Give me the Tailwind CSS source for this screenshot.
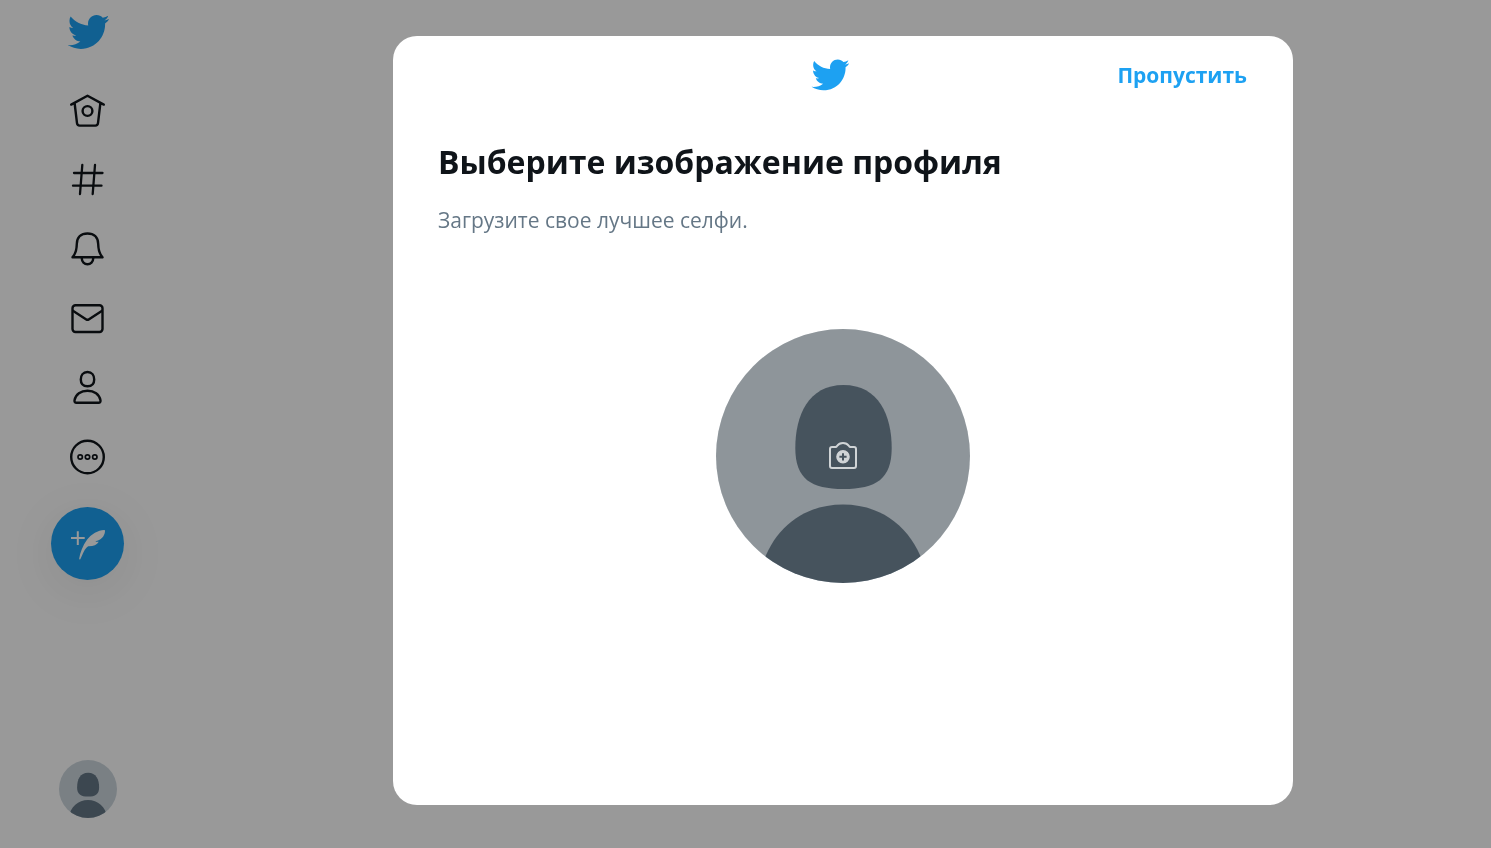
<!DOCTYPE html>
<html lang="ru">
<head>
    <meta charset="UTF-8">
    <meta name="viewport" content="width=device-width, initial-scale=1.0">
    <title>Выберите изображение профиля</title>
    <script src="https://cdn.jsdelivr.net/npm/@tailwindcss/browser@4"></script>
</head>
<body class="bg-white font-['Open_Sans','Noto_Sans',sans-serif] text-[#0f1419]">
    <!-- Shared shapes -->
    <svg class="hidden">
        <symbol id="bird" viewBox="0 0 24 24">
            <path fill="currentColor" d="M23.643 4.937c-.835.37-1.732.62-2.675.733.962-.576 1.7-1.49 2.048-2.578-.9.534-1.897.922-2.958 1.13-.85-.904-2.06-1.47-3.4-1.47-2.572 0-4.658 2.086-4.658 4.66 0 .364.042.718.12 1.06-3.873-.195-7.304-2.05-9.602-4.868-.4.69-.63 1.49-.63 2.342 0 1.616.823 3.043 2.072 3.878-.764-.025-1.482-.234-2.11-.583v.06c0 2.257 1.605 4.14 3.737 4.568-.392.106-.803.162-1.227.162-.3 0-.593-.028-.877-.082.593 1.85 2.313 3.198 4.352 3.234-1.595 1.25-3.604 1.995-5.786 1.995-.376 0-.747-.022-1.112-.065 2.062 1.323 4.51 2.093 7.14 2.093 8.57 0 13.255-7.098 13.255-13.254 0-.2-.005-.402-.014-.602.91-.658 1.7-1.477 2.323-2.41z"/>
        </symbol>
        <symbol id="person" viewBox="0 0 254 254">
            <rect width="254" height="254" fill="#ccd6dd"/>
            <path fill="#657786" d="M127.500 56C163 56 175.700 87 175.700 119C175.700 150 160 160 127.500 160S79.300 150 79.300 119C79.300 87 92 56 127.500 56Z"/>
            <path fill="#657786" d="M42 254C50 204 84 175.500 127 175.500S204 204 212 254Z"/>
        </symbol>
    </svg>

    <header class="flex min-h-screen w-[175px] flex-col items-center justify-between pt-2.5 pb-[30px]">
        <div class="flex flex-col items-center">
            <a href="/" aria-label="Твиттер" class="text-[#1da1f2]">
                <svg class="size-11"><use href="#bird"/></svg>
            </a>
            <nav class="mt-[37px] flex flex-col gap-[30px]">
                <a href="/home" aria-label="Главная">
                    <svg class="size-[39px]" viewBox="0 0 39 39" fill="none" stroke="currentColor" stroke-width="2.4" stroke-linecap="round" stroke-linejoin="round">
                        <path d="M3.200 13.600L19.500 4.700L35.800 13.600M6.600 12L9 32.200Q9.300 34.600 11.600 34.600H27.400Q29.700 34.600 30 32.200L32.400 12"/>
                        <circle cx="19.500" cy="20" r="4.900"/>
                    </svg>
                </a>
                <a href="/explore" aria-label="Обзор">
                    <svg class="size-[39px]" viewBox="0 0 39 39" fill="none" stroke="currentColor" stroke-width="2.300" stroke-linecap="round">
                        <path d="M14.300 5L12 34M27 5L24.700 34M6 13H34.500M5 25.700H33.500"/>
                    </svg>
                </a>
                <a href="/notifications" aria-label="Уведомления">
                    <svg class="size-[39px]" viewBox="0 0 39 39" fill="none" stroke="currentColor" stroke-width="2.400" stroke-linecap="round" stroke-linejoin="round">
                        <path d="M4.500 28.300C7.400 25 8.700 21 8.800 15C8.900 8.300 13 4.500 19.500 4.500S30.100 8.300 30.200 15C30.300 21 31.600 25 34.500 28.300Z"/>
                        <path d="M13.800 28.600V29.600A5.700 5.700 0 0 0 25.200 29.600V28.600"/>
                    </svg>
                </a>
                <a href="/messages" aria-label="Сообщения">
                    <svg class="size-[39px]" viewBox="0 0 39 39" fill="none" stroke="currentColor" stroke-width="2.400" stroke-linejoin="round">
                        <rect x="4.500" y="7.200" width="30" height="26.800" rx="3"/>
                        <path d="M4.500 12.500L18.300 21.400Q19.500 22.200 20.700 21.400L34.500 12.500"/>
                    </svg>
                </a>
                <a href="/profile" aria-label="Профиль">
                    <svg class="size-[39px]" viewBox="0 0 39 39" fill="none" stroke="currentColor" stroke-width="2.400" stroke-linejoin="round">
                        <path d="M19.500 5C24 5 26.200 8.400 26.200 12.600C26.200 17.400 24.200 19.300 19.500 19.300S12.800 17.400 12.800 12.600C12.800 8.400 15 5 19.500 5Z"/>
                        <path d="M19.500 23.700C26.200 23.700 31.400 27.400 32.500 33.400Q32.700 35.800 30.500 35.800H8.500Q6.300 35.800 6.500 33.400C7.600 27.400 12.800 23.700 19.500 23.700Z"/>
                    </svg>
                </a>
                <button type="button" aria-label="Ещё">
                    <svg class="size-[39px]" viewBox="0 0 39 39" fill="none" stroke="currentColor">
                        <circle cx="19.500" cy="21" r="16.300" stroke-width="2.400"/>
                        <g stroke-width="1.700">
                            <circle cx="12.200" cy="21" r="2.200"/>
                            <circle cx="19.500" cy="21" r="2.200"/>
                            <circle cx="26.800" cy="21" r="2.200"/>
                        </g>
                    </svg>
                </button>
            </nav>
            <button type="button" aria-label="Твитнуть" class="mt-8 rounded-full bg-[#1da1f2] text-white shadow-[0_10px_50px_rgba(0,0,0,0.08)]">
                <svg class="size-[73px]" viewBox="0 0 73 73">
                    <path stroke="currentColor" stroke-width="2" d="M20 31H33.700M26.800 24.200V38"/>
                    <path fill="currentColor" d="M28.200 51.500C29 46 31.800 38.500 36 32.700C40.500 27 47 23.200 53.200 23Q54.200 23.100 54 24.300C53.600 29.500 50 33.200 44.300 34.300C45.300 34.900 46.500 35 47.800 34.700C45.800 37.800 42.500 39.300 37.200 39.200C33.600 41.500 32 46.500 29.300 52.200Q28.300 53.200 28.200 51.500Z"/>
                </svg>
            </button>
        </div>
        <button type="button" aria-label="Аккаунт" class="overflow-hidden rounded-full">
            <svg class="size-[58px]"><use href="#person"/></svg>
        </button>
    </header>

    <!-- Profile picture dialog -->
    <div class="fixed inset-0 flex justify-center overflow-auto bg-black/40 pt-9 pb-[43px] pl-[195px]">
        <section role="dialog" aria-modal="true" aria-labelledby="dialog-title" class="flex w-full max-w-[900px] flex-col rounded-3xl bg-white">
            <div class="grid h-[78px] grid-cols-[1fr_auto_1fr] items-center pr-[46px] pl-5">
                <svg class="col-start-2 size-10 text-[#1da1f2]"><use href="#bird"/></svg>
                <button type="button" class="justify-self-end text-[21px] leading-7 font-bold text-[#1da1f2]">Пропустить</button>
            </div>
            <div class="px-[45px] pt-[22px]">
                <h1 id="dialog-title" class="text-[32px] leading-[52px] font-bold">Выберите изображение профиля</h1>
                <p class="mt-4 text-[21px] leading-8 text-[#657786]">Загрузите свое лучшее селфи.</p>
            </div>
            <button type="button" aria-label="Добавить фото" class="relative mt-[93px] self-center overflow-hidden rounded-full">
                <svg class="size-[254px]"><use href="#person"/></svg>
                <span class="absolute inset-0 flex items-center justify-center bg-black/30 text-white/75">
                    <svg class="size-[30px]" viewBox="0 0 30 30">
                        <path fill="none" stroke="currentColor" stroke-width="2" stroke-linejoin="round" d="M4 6H7.500Q8.500 6 9 5C10.500 2.800 12.500 2 15 2S19.500 2.800 21 5Q21.500 6 22.500 6H26Q28 6 28 8V25Q28 27 26 27H4Q2 27 2 25V8Q2 6 4 6Z"/>
                        <path fill="currentColor" fill-rule="evenodd" d="M15 9A6.800 6.800 0 1 0 15 22.600A6.800 6.800 0 1 0 15 9ZM14 12.200H16V14.800H18.600V16.800H16V19.400H14V16.800H11.400V14.800H14Z"/>
                    </svg>
                </span>
            </button>
        </section>
    </div>
</body>
</html>
